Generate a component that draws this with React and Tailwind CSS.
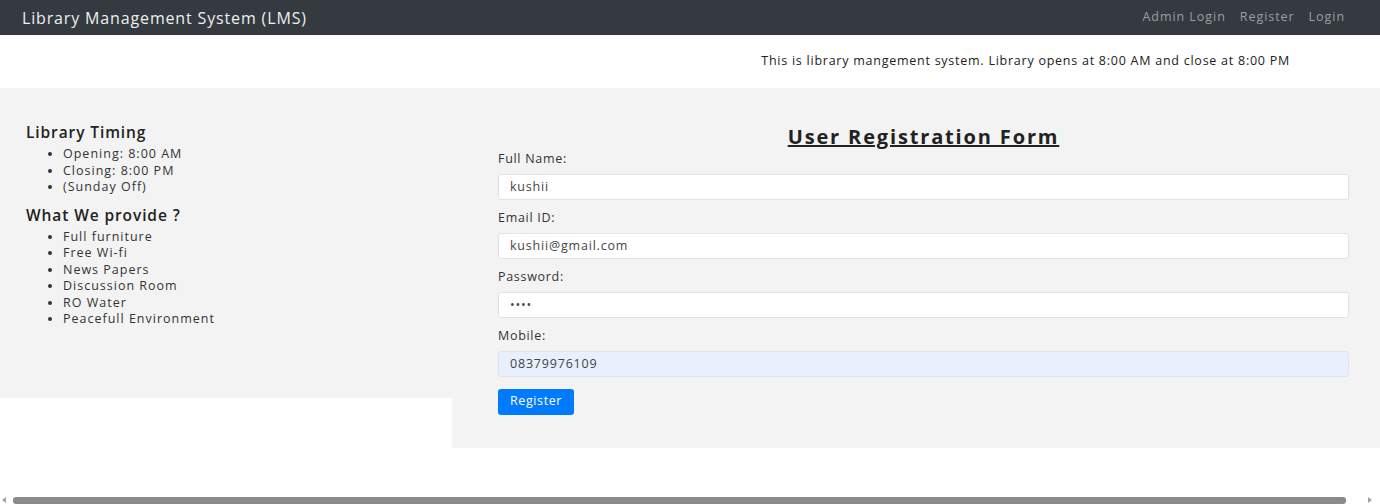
import { useState } from 'react';

const timings = ['Opening: 8:00 AM', 'Closing: 8:00 PM', '(Sunday Off)'];
const facilities = ['Full furniture', 'Free Wi-fi', 'News Papers', 'Discussion Room', 'RO Water', 'Peacefull Environment'];

const Field = ({ label, type = 'text', value, onChange, filled }) => (
  <div>
    <label className="block text-[12.5px] tracking-[0.7px] leading-[16px] text-[#333] mb-[6px]">{label}</label>
    <input
      type={type}
      value={value}
      onChange={onChange}
      className={`w-full h-[26px] px-[11px] text-[12.5px] tracking-[0.8px] text-[#444] border border-[#dfe2e6] rounded-[3px] outline-none ${filled ? 'bg-[#e8f0fe]' : 'bg-white'}`}
    />
  </div>
);

const App = () => {
  const [form, setForm] = useState({
    name: 'kushii',
    email: 'kushii@gmail.com',
    password: 'abcd',
    mobile: '08379976109',
  });

  const update = (key) => (e) => setForm({ ...form, [key]: e.target.value });

  return (
    <div className="relative min-h-[504px] bg-white font-['Open_Sans',sans-serif] overflow-hidden">
      {/* Navbar */}
      <nav className="h-[35px] bg-[#343a40] flex items-center justify-between pl-[22px] pr-[35px]">
        <span className="text-[16px] tracking-[0.85px] text-[#eeeeee]">Library Management System (LMS)</span>
        <div className="flex items-center gap-[14px] text-[12.5px] tracking-[0.95px] text-[#9b9ea1]">
          <a href="#">Admin Login</a>
          <a href="#">Register</a>
          <a href="#">Login</a>
        </div>
      </nav>

      {/* Intro */}
      <div className="h-[53px] flex items-center justify-end pr-[90px]">
        <p className="text-[12.5px] tracking-[0.75px] text-[#222]">
          This is library mangement system. Library opens at 8:00 AM and close at 8:00 PM
        </p>
      </div>

      <div className="flex items-start">
        {/* Sidebar */}
        <div className="w-[452px] h-[310px] bg-[#f3f3f3] pl-[26px] pt-[35px]">
          <h3 className="text-[15.5px] tracking-[0.9px] font-semibold text-[#222] leading-[18px]">Library Timing</h3>
          <ul className="list-disc pl-[37px] text-[12.5px] tracking-[1px] text-[#333] leading-[16.5px] mt-[5px]">
            {timings.map((t) => (
              <li key={t}>{t}</li>
            ))}
          </ul>
          <h3 className="text-[15.5px] tracking-[0.9px] font-semibold text-[#222] leading-[18px] mt-[10px]">What We provide ?</h3>
          <ul className="list-disc pl-[37px] text-[12.5px] tracking-[1px] text-[#333] leading-[16.5px] mt-[5px]">
            {facilities.map((f) => (
              <li key={f}>{f}</li>
            ))}
          </ul>
        </div>

        {/* Registration form */}
        <div className="flex-1 h-[360px] bg-[#f3f3f3] pl-[46px] pr-[31px] pt-[36px]">
          <h2 className="text-center text-[20px] tracking-[1.85px] font-bold underline text-[#222] leading-[26px]">
            User Registration Form
          </h2>
          <div className="flex flex-col gap-[10.5px] mt-[1px]">
            <Field label="Full Name:" value={form.name} onChange={update('name')} />
            <Field label="Email ID:" value={form.email} onChange={update('email')} />
            <Field label="Password:" type="password" value={form.password} onChange={update('password')} />
            <Field label="Mobile:" value={form.mobile} onChange={update('mobile')} filled />
          </div>
          <button className="mt-[12px] h-[26px] px-[12px] bg-[#007bff] text-white text-[12.5px] tracking-[0.6px] rounded-[3px]">
            Register
          </button>
        </div>
      </div>

      {/* Horizontal scrollbar */}
      <div className="absolute left-0 right-0 bottom-0 h-[8px] flex items-center">
        <span className="w-0 h-0 ml-[2px] border-y-[3px] border-y-transparent border-r-[4px] border-r-[#a3a3a3]" />
        <div className="ml-[7px] w-[1333px] h-[7px] bg-[#8a8a8a] rounded-[3px]" />
        <span className="w-0 h-0 ml-[22px] border-y-[3px] border-y-transparent border-l-[4px] border-l-[#a3a3a3]" />
      </div>
    </div>
  );
};

export default App;
